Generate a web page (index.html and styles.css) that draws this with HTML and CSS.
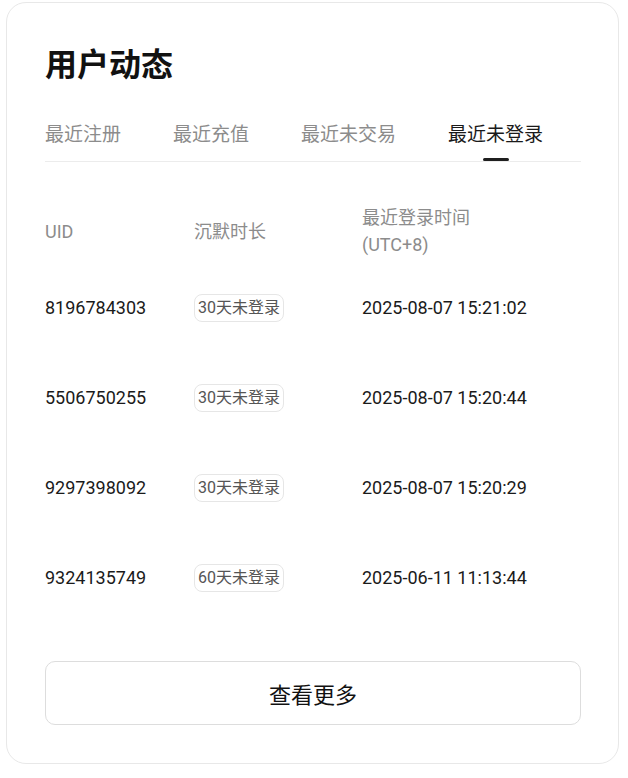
FILE: index.html
```html
<!DOCTYPE html>
<html lang="zh-CN">
<head>
<meta charset="utf-8">
<title>用户动态</title>
<link rel="stylesheet" href="styles.css">
</head>
<body>
<section class="card">
  <h1 class="title">用户动态</h1>
  <nav class="tabs">
    <span class="tab">最近注册</span>
    <span class="tab">最近充值</span>
    <span class="tab">最近未交易</span>
    <span class="tab active">最近未登录</span>
  </nav>
  <div class="table">
    <div class="row head">
      <div class="cell">UID</div>
      <div class="cell">沉默时长</div>
      <div class="cell">最近登录时间<br>(UTC+8)</div>
    </div>
    <div class="row">
      <div class="cell">8196784303</div>
      <div class="cell"><span class="badge">30天未登录</span></div>
      <div class="cell">2025-08-07 15:21:02</div>
    </div>
    <div class="row">
      <div class="cell">5506750255</div>
      <div class="cell"><span class="badge">30天未登录</span></div>
      <div class="cell">2025-08-07 15:20:44</div>
    </div>
    <div class="row">
      <div class="cell">9297398092</div>
      <div class="cell"><span class="badge">30天未登录</span></div>
      <div class="cell">2025-08-07 15:20:29</div>
    </div>
    <div class="row">
      <div class="cell">9324135749</div>
      <div class="cell"><span class="badge">60天未登录</span></div>
      <div class="cell">2025-06-11 11:13:44</div>
    </div>
  </div>
  <button class="more" type="button">查看更多</button>
</section>
</body>
</html>
```

FILE: styles.css
```css
* { box-sizing: border-box; }
html, body { margin: 0; padding: 0; background: #ffffff; }
body {
  font-family: Roboto, "Noto Sans CJK SC", sans-serif;
  color: #1a1a1a;
}
.card {
  margin: 2px 9px 14px 6px;
  border: 1px solid #e8e8e8;
  border-radius: 20px;
  padding: 42px 37px 38px 38px;
  display: flex;
  flex-direction: column;
}
.title {
  margin: 0;
  font-size: 32px;
  line-height: 40px;
  font-weight: 700;
  color: #111111;
}
.tabs {
  margin-top: 37px;
  display: flex;
  gap: 52px;
  border-bottom: 1px solid #ececec;
}
.tab {
  position: relative;
  font-size: 19px;
  line-height: 26px;
  padding-bottom: 13px;
  color: #8c8c8c;
}
.tab.active { color: #1a1a1a; }
.tab.active::after {
  content: "";
  position: absolute;
  left: 50%;
  bottom: 0;
  width: 26px;
  height: 3px;
  margin-left: -13px;
  border-radius: 2px;
  background: #1f1f1f;
}
.table { display: flex; flex-direction: column; }
.row {
  display: grid;
  grid-template-columns: 149px 168px 1fr;
  align-items: center;
  height: 90px;
  font-size: 18px;
  line-height: 26px;
  color: #1a1a1a;
}
.row.head {
  height: auto;
  padding: 42px 0 5px;
  font-size: 18px;
  line-height: 27px;
  color: #8c8c8c;
}
.badge {
  display: inline-block;
  height: 28px;
  line-height: 26px;
  padding: 0 3px;
  border: 1px solid #e6e6e6;
  border-radius: 8px;
  font-size: 16px;
  color: #555555;
}
.more {
  margin-top: 38px;
  height: 64px;
  width: 100%;
  background: #ffffff;
  border: 1px solid #dddddd;
  border-radius: 10px;
  font-family: Roboto, "Noto Sans CJK SC", sans-serif;
  font-size: 22px;
  color: #111111;
  cursor: pointer;
}
```
